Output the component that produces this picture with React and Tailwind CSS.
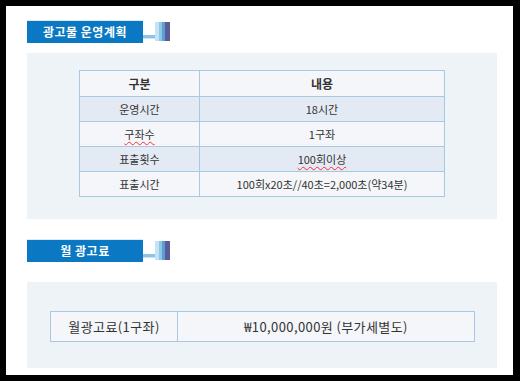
import React from "react";

const FONT = { fontFamily: '"Noto Sans CJK KR", "Noto Sans", sans-serif' };

const PLAN_ROWS = [
  { label: "운영시간", value: "18시간" },
  { label: "구좌수", value: "1구좌", typo: "label" },
  { label: "표출횟수", value: "100회이상", typo: "value" },
  { label: "표출시간", value: "100회x20초//40초=2,000초(약34분)" },
];

const squiggle = "underline decoration-wavy decoration-red-500 decoration-1 underline-offset-2";

function TitleBar({ children }) {
  return (
    <div className="flex items-stretch h-[23px]">
      <div className="w-[116px] bg-[#0a78c2] border-t border-[#dde9f3] flex items-center justify-center text-white text-[12px] font-bold tracking-[0.5px]">
        {children}
      </div>
      <svg width="28" height="23" viewBox="0 0 28 23" className="block">
        <rect x="0" y="15" width="22" height="3" fill="#8cc3e6" />
        <rect x="0" y="18" width="22" height="1" fill="#c9e2f3" />
        <rect x="12" y="2" width="4" height="19" fill="#c6e3f4" />
        <rect x="16" y="2" width="3" height="19" fill="#8ec6e8" />
        <rect x="19" y="2" width="3" height="19" fill="#5b9fd0" />
        <rect x="22" y="2" width="5" height="19" fill="#5a5c9a" />
      </svg>
    </div>
  );
}

export default function App() {
  return (
    <div className="w-[520px] h-[381px] bg-black p-[6px] pr-[7px]" style={FONT}>
      <div className="h-full bg-white pl-[21px] pr-[16px] pt-[14px]">
        <TitleBar>광고물 운영계획</TitleBar>

        <div className="mt-[10px] bg-[#eef3f7] h-[166px] pt-[17px] pl-[52px]">
          <table className="w-[366px] border-collapse text-[11px] text-[#333] text-center">
            <thead>
              <tr className="h-[26px] bg-[#f4f6fa]">
                <th className="w-[120px] border border-[#a9c9e3] text-[12px] font-bold">구분</th>
                <th className="border border-[#a9c9e3] text-[12px] font-bold">내용</th>
              </tr>
            </thead>
            <tbody>
              {PLAN_ROWS.map((row, i) => (
                <tr key={row.label} className={`h-[25px] ${i % 2 === 0 ? "bg-[#e3eaf4]" : "bg-[#f4f6fa]"}`}>
                  <td className="border border-[#a9c9e3]">
                    <span className={row.typo === "label" ? squiggle : ""}>{row.label}</span>
                  </td>
                  <td className="border border-[#a9c9e3]">
                    <span className={row.typo === "value" ? squiggle : ""}>{row.value}</span>
                  </td>
                </tr>
              ))}
            </tbody>
          </table>
        </div>

        <div className="mt-[20px]">
          <TitleBar>월 광고료</TitleBar>
        </div>

        <div className="mt-[20px] bg-[#eef3f7] h-[86px] pt-[29px] pl-[23px]">
          <table className="w-[425px] border-collapse text-[13px] tracking-[0.4px] text-[#333] text-center">
            <tbody>
              <tr className="h-[30px] bg-[#f4f6fa]">
                <td className="w-[127px] border border-[#a9c9e3]">월광고료(1구좌)</td>
                <td className="border border-[#a9c9e3]">₩10,000,000원 (부가세별도)</td>
              </tr>
            </tbody>
          </table>
        </div>
      </div>
    </div>
  );
}
